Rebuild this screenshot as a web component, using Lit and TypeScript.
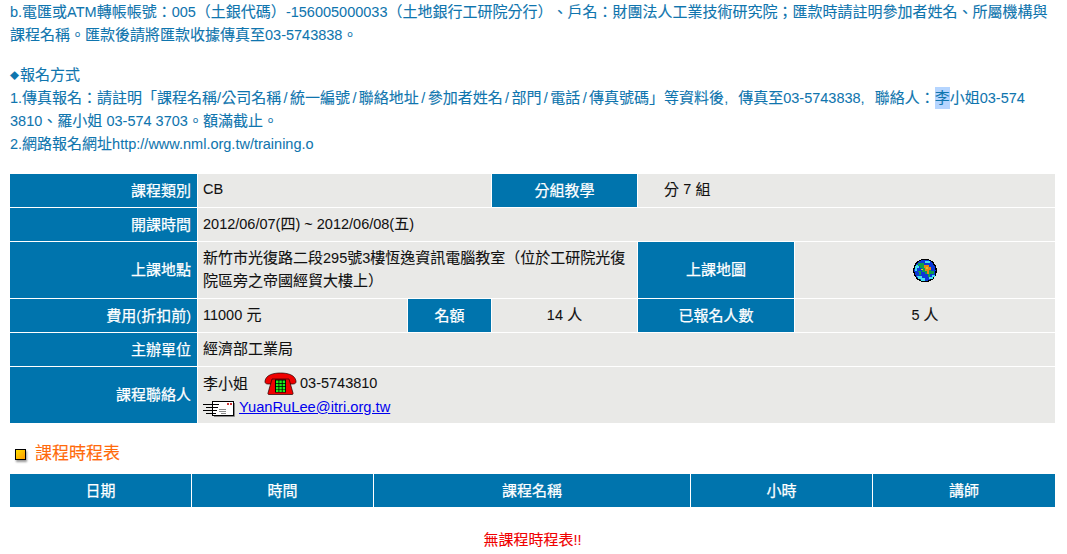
import { LitElement, html, css } from "lit";
import { customElement } from "lit/decorators.js";

const globe = html`<svg class="globe" width="24" height="25" viewBox="0 0 24 24" shape-rendering="crispEdges" aria-hidden="true">
  <circle cx="12" cy="12" r="11.8" fill="#000"/>
  <circle cx="12" cy="12" r="10.6" fill="#0c38d8"/>
  <path fill="#45e0ee" d="M3 6h3v3H4v3H2V8zM4 17h5v2h3v3H8v-2H5zM16 20h4v-2h2v-2h-3v2h-3zM12 2h5v2h-5z"/>
  <path fill="#0fa04a" d="M6 4h5v3h2v2h5v3h3v3h-4v3h-2v-3h-3v-2h-3V9H7V7H5V5zM5 12h3v4H6z"/>
  <path fill="#ec8410" d="M11 6h5v2h2v3h-2v4h-2v-3h-2V9h-1z"/>
  <path fill="#d8c820" d="M13 8h2v2h-2zM8 10h2v1H8z"/>
</svg>`;

const phone = html`<svg class="phone" width="33" height="23" viewBox="0 0 33 23" aria-hidden="true">
  <path fill="#f00000" stroke="#200" stroke-width=".7" d="M1 9C2 3 9 1 16.500 1S31 3 32 9c.3 2-1 3-3 3h-3c-1.500 0-2-1-2-3 0-1-.5-1.500-2-1.500H11C9.500 7.500 9 8 9 9c0 2-.5 3-2 3H4c-2 0-3.300-1-3-3z"/>
  <path fill="#f00000" stroke="#200" stroke-width=".7" d="M8 7h17l4 14c.3 1-.2 1.500-1 1.500H5c-.8 0-1.300-.5-1-1.500z"/>
  <rect x="11" y="7.500" width="11" height="13" fill="#000"/>
  <path fill="#1cf01c" d="M12 8.500h2.500v2.500H12zM15.300 8.500h2.500v2.500h-2.500zM18.600 8.500h2.500v2.500h-2.500zM12 11.700h2.500v2.500H12zM15.300 11.700h2.500v2.500h-2.500zM18.600 11.700h2.500v2.500h-2.500zM12 14.900h2.500v2.500H12zM15.300 14.900h2.500v2.500h-2.500zM18.600 14.900h2.500v2.500h-2.500zM12 18h2.500v2H12zM15.300 18h2.500v2h-2.500zM18.600 18h2.500v2h-2.500z"/>
</svg>`;

const mail = html`<svg class="mail" width="32" height="18" viewBox="0 0 32 18" aria-hidden="true">
  <rect x="9.500" y="1.500" width="21" height="14" fill="#fff" stroke="#000"/>
  <path d="M11 16.500h20.500V3" fill="none" stroke="#888"/>
  <path stroke="#000" fill="none" d="M0 4.500h16M3 7.500h12M0 10.500h14M3 13.500h10"/>
  <path stroke="#888" fill="none" d="M16 9.500h7M16 11.500h7M18 13.500h5"/>
  <rect x="24" y="3" width="2" height="2" fill="#c33"/><rect x="27" y="3" width="2" height="2" fill="#c33"/>
</svg>`;

@customElement("app-root")
export class AppRoot extends LitElement {
  static styles = css`
    :host {
      display: block;
      width: 1067px;
      height: 554px;
      overflow: hidden;
      background: #fff;
      font-family: "Liberation Sans", "Noto Sans CJK TC", sans-serif;
      font-size: 15px;
      color: #111;
      box-sizing: border-box;
      padding: 0 12px 0 10px;
      -webkit-text-stroke: 0.12px;
      text-spacing-trim: space-all;
    }
    .l { font-size: 14.5px; line-height: 1; -webkit-text-stroke: 0.05px; }
    .notes {
      margin: 0;
      color: #0f75ae;
      line-height: 23px;
      white-space: nowrap;
    }
    .gap { height: 17px; }
    .dia { font-size: 9px; line-height: 1; vertical-align: 1px; margin-right: 1px; }
    .sel { background: #b5d5ff; padding: 2px 0 3px; }
    .sl { margin: 0 2.4px; }
    .cm { margin-right: 10px; }
    .info {
      margin-top: 19px;
      display: grid;
      grid-template-columns: 187px 209px 83px 145px 156px 260px;
      grid-template-rows: 33px 33px 56px 33px 33px 56px;
      gap: 1px;
      width: 1045px;
    }
    .th {
      background: #0074ad;
      color: #fff;
      display: flex;
      align-items: center;
      justify-content: center;
      padding-bottom: 3px;
      box-sizing: border-box;
      -webkit-text-stroke: 0.25px #fff;
    }
    .th.r { justify-content: flex-end; padding-right: 6px; }
    .td {
      background: #e9e9e7;
      padding: 0 0 3px 5px;
      line-height: 23px;
      display: flex;
      align-items: center;
      box-sizing: border-box;
    }
    .td.c { justify-content: center; padding-left: 0; }
    .s2 { grid-column: span 2; }
    .s3 { grid-column: span 3; }
    .s5 { grid-column: span 5; }
    .group { padding-left: 26px; }
    .globe { margin-top: 3px; }
    .contact { display: block; padding: 4px 0 0 5px; }
    .contact div { display: flex; align-items: center; height: 24px; }
    .phone { margin: 0 3px 0 16px; }
    .mail { margin: 4px 4px 0 0; }
    a { color: #0000ee; font-size: 14.7px; -webkit-text-stroke: 0; }
    h2 {
      margin: 15px 0 0;
      height: 30px;
      padding-bottom: 4px;
      box-sizing: border-box;
      display: flex;
      align-items: center;
      font-size: 17px;
      font-weight: 400;
      color: #ff6a0a;
    }
    .mark {
      width: 9px;
      height: 9px;
      margin: 7px 9px 0 5px;
      border: 1px solid #000;
      background: linear-gradient(135deg, #ffe000, #ff9a00);
      box-shadow: 1px 2px 2px #999;
    }
    .sched {
      display: grid;
      grid-template-columns: 181px 181px 316px 181px 182px;
      grid-auto-rows: 33px;
      gap: 1px;
      width: 1045px;
      margin-top: 6px;
    }
    .none {
      margin-top: 21px;
      text-align: center;
      color: #f00000;
    }
  `;

  render() {
    const sl = html`<span class="l sl">/</span>`;
    return html`
      <p class="notes">
        <span class="l">b.</span>電匯或<span class="l">ATM</span>轉帳帳號：<span class="l">005</span>（土銀代碼）<span class="l">-156005000033</span>（土地銀行工研院分行）、戶名：財團法人工業技術研究院；匯款時請註明參加者姓名、所屬機構與<br />
        課程名稱。匯款後請將匯款收據傳真至<span class="l">03-5743838</span>。
      </p>
      <div class="gap"></div>
      <p class="notes">
        <span class="dia">◆</span>報名方式<br />
        <span class="l">1.</span>傳真報名：請註明「課程名稱<span class="l">/</span>公司名稱${sl}統一編號${sl}聯絡地址${sl}參加者姓名${sl}部門${sl}電話${sl}傳真號碼」等資料後<span class="l cm">,</span>傳真至<span class="l">03-5743838</span><span class="l cm">,</span>聯絡人：<span class="sel">李</span>小姐<span class="l">03-574</span><br />
        <span class="l">3810</span>、羅小姐 <span class="l">03-574 3703</span>。額滿截止。<br />
        <span class="l">2.</span>網路報名網址<span class="l">http://www.nml.org.tw/training.o</span>
      </p>
      <div class="info">
        <div class="th r">課程類別</div>
        <div class="td s2"><span class="l">CB</span></div>
        <div class="th">分組教學</div>
        <div class="td s2 group">分&nbsp;<span class="l">7</span>&nbsp;組</div>

        <div class="th r">開課時間</div>
        <div class="td s5"><span><span class="l">2012/06/07(</span>四<span class="l">) ~ 2012/06/08(</span>五<span class="l">)</span></span></div>

        <div class="th r">上課地點</div>
        <div class="td s3"><span>新竹市光復路二段<span class="l">295</span>號<span class="l">3</span>樓恆逸資訊電腦教室（位於工研院光復<br />院區旁之帝國經貿大樓上）</span></div>
        <div class="th">上課地圖</div>
        <div class="td c">${globe}</div>

        <div class="th r"><span>費用<span class="l">(</span>折扣前<span class="l">)</span></span></div>
        <div class="td"><span><span class="l">11000</span> 元</span></div>
        <div class="th">名額</div>
        <div class="td c"><span><span class="l">14</span> 人</span></div>
        <div class="th">已報名人數</div>
        <div class="td c"><span><span class="l">5</span> 人</span></div>

        <div class="th r">主辦單位</div>
        <div class="td s5">經濟部工業局</div>

        <div class="th r">課程聯絡人</div>
        <div class="td s5 contact">
          <div>李小姐 ${phone} <span class="l">03-5743810</span></div>
          <div>${mail}<a href="#">YuanRuLee@itri.org.tw</a></div>
        </div>
      </div>
      <h2><span class="mark"></span>課程時程表</h2>
      <div class="sched">
        <div class="th">日期</div>
        <div class="th">時間</div>
        <div class="th">課程名稱</div>
        <div class="th">小時</div>
        <div class="th">講師</div>
      </div>
      <div class="none">無課程時程表<span class="l">!!</span></div>
    `;
  }
}
